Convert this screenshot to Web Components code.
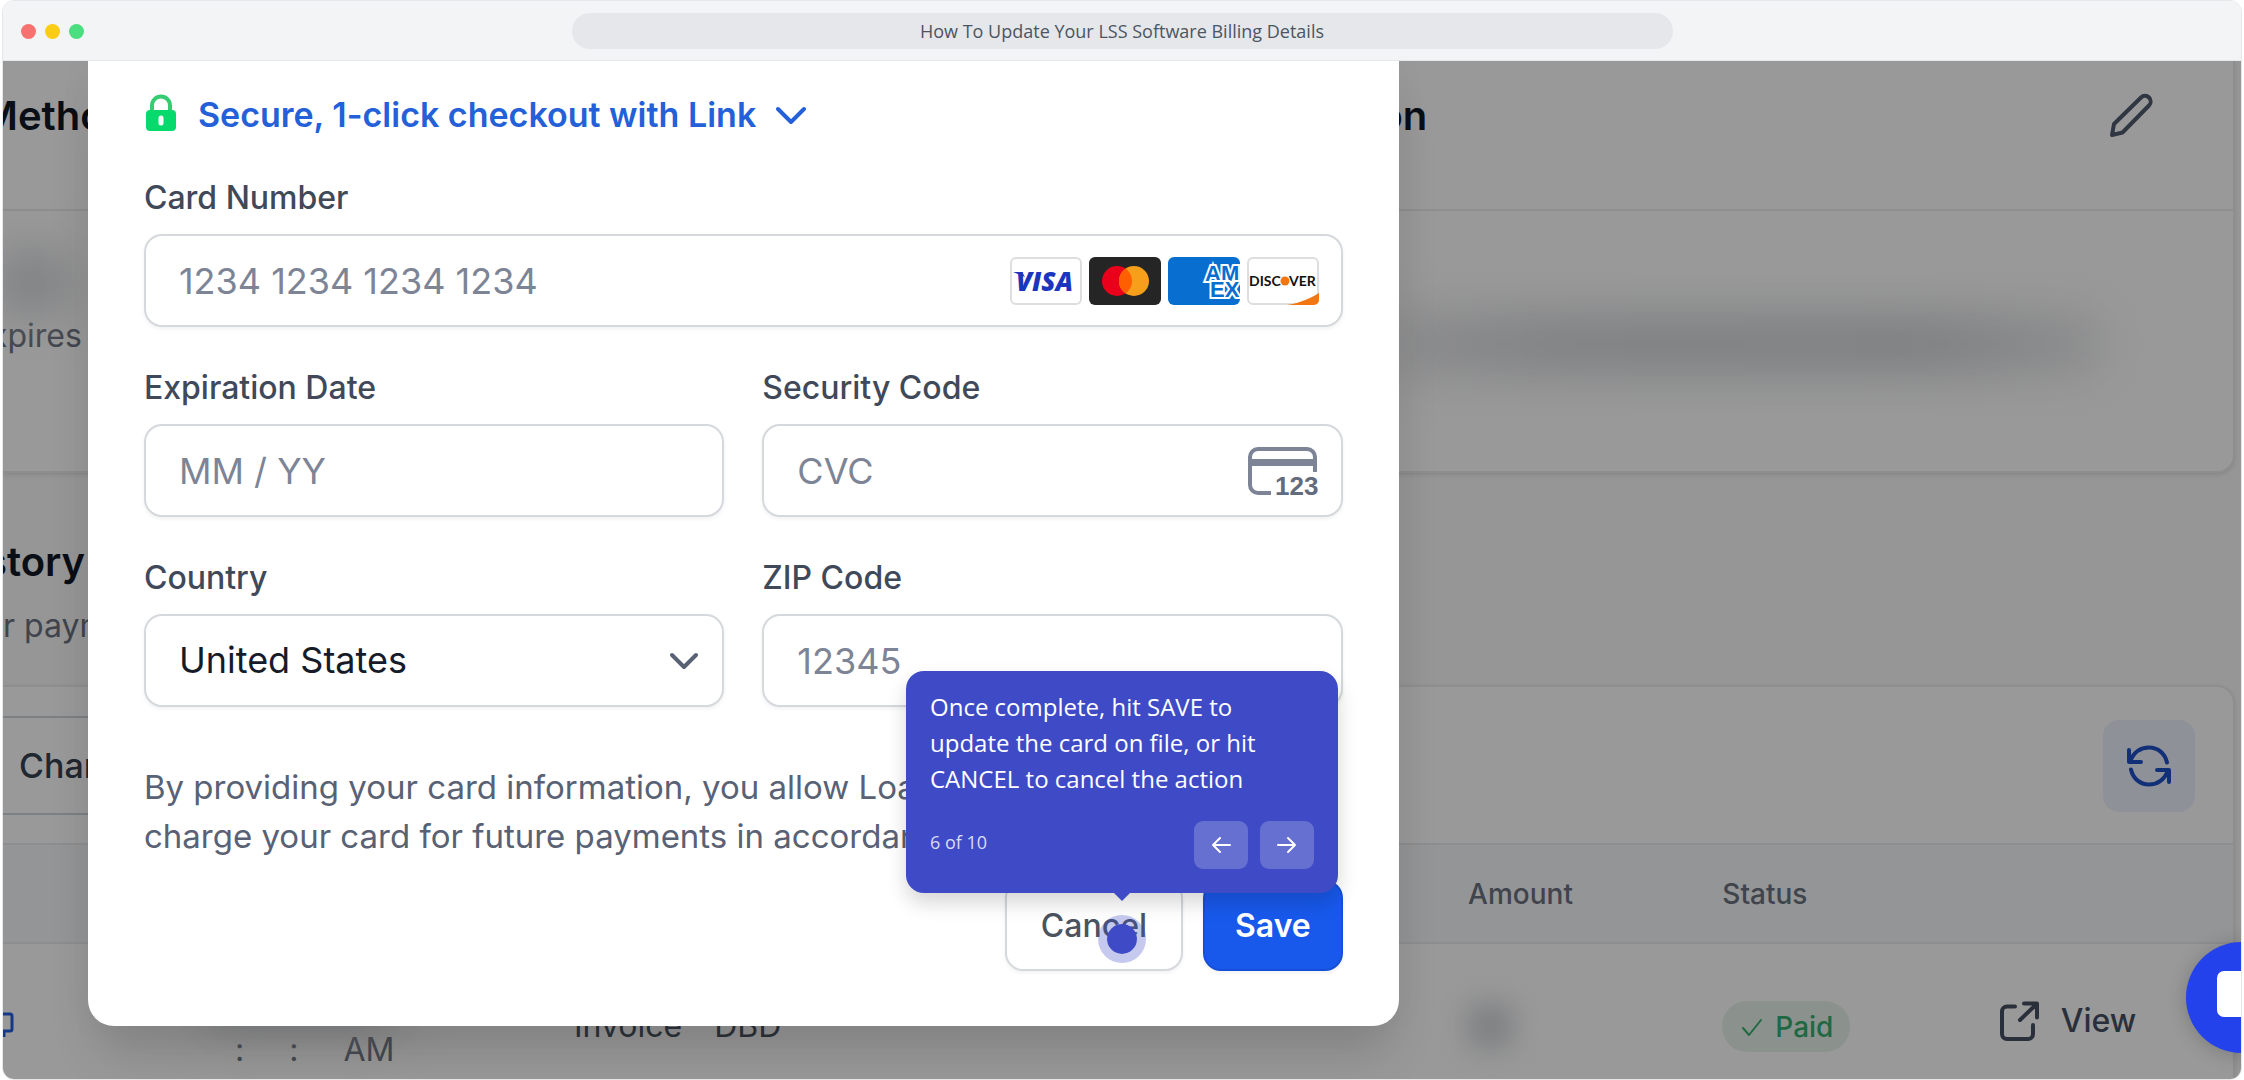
<!DOCTYPE html>
<html lang="en">
<head>
<meta charset="utf-8">
<title>How To Update Your LSS Software Billing Details</title>
<style>
  html,body{height:100%;margin:0}
  body{background:#fff;overflow:hidden;font-family:Inter,"Liberation Sans",sans-serif}
</style>
</head>
<body>
<browser-frame heading="How To Update Your LSS Software Billing Details">
  <billing-page></billing-page>
  <card-dialog slot="over"></card-dialog>
  <chat-bubble slot="over"></chat-bubble>
  <tour-step slot="over" step="6" total="10">Once complete, hit SAVE to update the card on file, or hit CANCEL to cancel the action</tour-step>
</browser-frame>

<script>
(()=>{
  const define=(name,render)=>customElements.define(name,class extends HTMLElement{
    connectedCallback(){
      if(this.shadowRoot)return;
      this.attachShadow({mode:'open'}).innerHTML=render(this);
    }
  });

  const reset=`*{box-sizing:border-box}
svg{display:block;flex-shrink:0}
button{font:inherit;color:inherit;cursor:pointer}
h2,p{margin:0}`;

  define('browser-frame',el=>`<style>${reset}
:host{display:flex;flex-direction:column;height:100vh;margin:0 2px;box-sizing:border-box;
  border:1px solid #e5e7eb;border-radius:12px;overflow:hidden}
header{display:grid;grid-template-columns:1fr 2fr 1fr;align-items:center;flex-shrink:0;
  padding:12px 18px 11px;background:#f3f4f6;border-bottom:1px solid #e5e7eb}
.dots{display:flex;gap:9px}
.dots i{width:15px;height:15px;border-radius:50%}
.bar{border-radius:18px;background:#e5e7eb;color:#4b5563;text-align:center;
  font:18px/36px "Open Sans",sans-serif}
main{position:relative;flex:1;min-height:0;overflow:hidden}
.dim{position:absolute;inset:0;background:rgba(0,0,0,.4)}
</style>
<header>
  <span class="dots"><i style="background:#f87171"></i><i style="background:#facc15"></i><i style="background:#4ade80"></i></span>
  <div class="bar">${el.getAttribute('heading')}</div>
</header>
<main><slot></slot><div class="dim"></div><slot name="over"></slot></main>`);

  define('billing-page',()=>`<style>${reset}
:host{display:block;background:#fafafa;color:#111827;padding-right:6px;white-space:nowrap}
.card{background:#fff;border:solid #ededee;border-width:0 2px 2px 0;box-shadow:0 2px 4px rgba(0,0,0,.1)}
.method{border-radius:0 0 18px 0}
.title{display:grid;grid-template-columns:85fr 1312fr 843fr;align-items:center;
  padding:27px 0 65px;border-bottom:2px solid #ededee}
h2{font-size:40px;line-height:56px;font-weight:600}
.title h2:first-child{margin-left:-22px}
.title .end{grid-column:3;display:flex;justify-content:space-between;align-items:center;padding-right:79px}
.title .end h2{margin-left:-22px}
.title button{border:0;background:none;padding:0;color:#505a6e}
.info{display:grid;grid-template-columns:1397fr 843fr;align-items:end;padding:41px 0 111px;
  font-size:32px;line-height:48px;color:#6b7280}
.info div{margin-left:-13px}
.smudge{display:block;filter:blur(24px);background:#d2d4d8}
.history{padding:61px 0 35px;color:#6b7280;font-size:32px;line-height:48px}
.history h2{margin:0 0 12px -18px;color:#111827}
.list{border-width:2px 2px 0 0;border-radius:0 18px 0 0}
.tools{display:flex;justify-content:space-between;align-items:center;padding:29px 38px 28px 0}
.pick{padding:24px 60px 24px 16px;border:solid #d1d5db;border-width:2px 0;background:#fff;
  color:#374151;font-size:34px;line-height:47px;font-weight:500}
.refresh{display:grid;place-items:center;width:92px;height:92px;border:0;border-radius:16px;background:#eff2ff;color:#1d50c8}
table{width:100%;table-layout:fixed;border-collapse:collapse;text-align:left;font-size:32px;line-height:48px;color:#4b5563}
th,td{padding:0}
th{height:99px;background:#f7f8fa;border:solid #ededee;border-width:2px 0;font-size:28px;font-weight:500;color:#6b7280}
td{padding:34px 0}
.date{color:#6b7280;white-space:pre}
.item span{margin-left:32px}
.paid{display:inline-flex;align-items:center;gap:12px;padding:2px 17px 1px 19px;border-radius:25px;
  background:#e8f4ed;color:#36ad6f;font-size:28px;font-weight:500;vertical-align:middle}
.view{display:flex;align-items:center;gap:22px;padding-bottom:10px;color:#465063;font-weight:500;text-decoration:none}
</style>
<section class="card method">
  <div class="title">
    <h2>Metho</h2>
    <div class="end">
      <h2>on</h2>
      <button aria-label="Edit billing information"><svg width="46" height="46" viewBox="0 0 46 46" fill="none" stroke="currentColor" stroke-width="4" stroke-linejoin="round"><path d="M4 42l2-11L33 4.500a5.500 5.500 0 0 1 8 8L14.500 39.500z"/></svg></button>
    </div>
  </div>
  <div class="info">
    <div><span class="smudge" style="width:70px;height:60px;margin-left:8px"></span>xpires</div>
    <span class="smudge" style="width:84%;height:56px;margin-bottom:-12px;background:linear-gradient(90deg,#e4e5e8,#d2d4d8 25%,#cfd1d5 75%,#e8e9eb)"></span>
  </div>
</section>
<section class="history"><h2>story</h2>r paym</section>
<section class="card list">
  <div class="tools">
    <button class="pick">Char</button>
    <button class="refresh" aria-label="Refresh"><svg width="46" height="42" viewBox="0 0 46 42" fill="none" stroke="currentColor" stroke-width="4" stroke-linecap="round" stroke-linejoin="round"><path d="M3 5v12h12M4 16C8 7 15 2.500 23 2.500c9 0 16 6 18 15M43 37V25H31M42 26c-4 9-11 13.500-19 13.500-9 0-16-6-18-15"/></svg></button>
  </div>
  <table>
    <colgroup><col style="width:10%"><col style="width:15.600%"><col style="width:40.100%"><col style="width:11.400%"><col style="width:12.400%"><col></colgroup>
    <thead><tr><th></th><th></th><th></th><th>Amount</th><th>Status</th><th></th></tr></thead>
    <tbody><tr>
      <td><svg width="12" height="32" viewBox="0 0 12 32" fill="none" stroke="#2460e0" stroke-width="3"><path d="M-2 4h9a2 2 0 0 1 2 2v13a2 2 0 0 1-2 2H1v6"/></svg></td>
      <td class="date"><span class="smudge" style="width:190px;height:48px;margin-left:-20px"></span> :     :     AM</td>
      <td class="item">Invoice<span>DBD</span></td>
      <td><span class="smudge" style="width:44px;height:44px;filter:blur(14px)"></span></td>
      <td><span class="paid"><svg width="22" height="22" viewBox="0 0 22 22" fill="none" stroke="currentColor" stroke-width="2" stroke-linecap="round" stroke-linejoin="round"><path d="M2 12l6 7L20 4"/></svg>Paid</span></td>
      <td><a class="view" href="#"><svg width="40" height="40" viewBox="0 0 40 40" fill="none" stroke="currentColor" stroke-width="4" stroke-linecap="round" stroke-linejoin="round"><path d="M16 5.500H8a5 5 0 0 0-5 5V33a5 5 0 0 0 5 5h21a5 5 0 0 0 5-5V24M25 2.500h13v14M37 3.500L21 19"/></svg>View</a></td>
    </tr></tbody>
  </table>
</section>`);

  define('form-field',el=>`<style>${reset}
:host{display:block;min-width:0}
label{display:block;margin-bottom:16px;font-size:32px;line-height:40px;font-weight:500;color:#3f4959}
.box{display:flex;align-items:center;border:2px solid #d5d8dd;border-radius:18px;background:#fff;
  box-shadow:0 2px 4px rgba(0,0,0,.06);padding-right:22px}
input,select{flex:1;min-width:0;border:0;outline:0;background:none;appearance:none;
  padding:20px 0 20px 33px;font:36px/49px Inter,sans-serif;height:89px;color:#161b2a}
input::placeholder{color:#7d8496;opacity:1}
</style>
<label for="f">${el.getAttribute('label')}</label>
<div class="box">${el.hasAttribute('value')
    ?`<select id="f"><option>${el.getAttribute('value')}</option></select>`
    :`<input id="f" placeholder="${el.getAttribute('hint')}">`}<slot></slot></div>`);

  define('card-brands',()=>`<style>${reset}
:host{display:flex;gap:7px}
svg{font-family:"Open Sans",sans-serif;font-weight:700}
</style>
<svg width="72" height="48" viewBox="0 0 72 48"><rect x="1" y="1" width="70" height="46" rx="5" fill="#fff" stroke="#dedede" stroke-width="2"/><path d="M3 15h9l3 5z" fill="#1a35be"/><text x="6" y="34" font-size="26" font-style="italic" font-weight="800" fill="#1a35be">VISA</text></svg>
<svg width="72" height="48" viewBox="0 0 72 48"><rect width="72" height="48" rx="6" fill="#252525"/><circle cx="28" cy="24" r="15" fill="#eb001b"/><circle cx="45" cy="24" r="15" fill="#f79e1b"/><path d="M36.500 11.600a15 15 0 0 1 0 24.800a15 15 0 0 1 0-24.800z" fill="#ff5f00"/></svg>
<svg width="72" height="48" viewBox="0 0 72 48"><rect width="72" height="48" rx="6" fill="#086fd1"/><g fill="#086fd1" stroke="#fff" stroke-width="4" paint-order="stroke" font-size="22" font-family="Liberation Sans"><text x="37" y="24">AM</text><text x="42" y="40">EX</text></g></svg>
<svg width="72" height="48" viewBox="0 0 72 48"><rect x="1" y="1" width="70" height="46" rx="5" fill="#fff" stroke="#dedede" stroke-width="2"/><path d="M40 48C52 46 62 42 72 36v7a5 5 0 0 1-5 5z" fill="#f27712"/><g font-size="14" font-family="Lato" fill="#111"><text x="2" y="29">DISC</text><text x="42" y="29">VER</text></g><circle cx="38" cy="24" r="4.500" fill="#f27712"/></svg>`);

  define('card-dialog',()=>`<style>${reset}
:host{position:absolute;inset:0;display:grid;grid-template-columns:85fr 1312fr 843fr;align-items:start}
form{grid-column:2;display:flex;flex-direction:column;padding:29px 56px 55px;background:#fff;
  border-radius:0 0 26px 26px;box-shadow:0 36px 50px -10px rgba(0,0,0,.14),0 0 40px rgba(0,0,0,.03)}
.link{display:flex;align-items:center;align-self:flex-start;gap:20px;padding:0;border:0;background:none;
  margin-bottom:38px;font-size:34px;line-height:50px;font-weight:600;color:#2460d8}
.fields{display:grid;grid-template-columns:1fr 1fr;gap:41px 38px}
.wide{grid-column:1/-1}
p{margin:56px 0 19px;font-size:33px;line-height:49px;color:#596174;white-space:nowrap}
.actions{display:flex;justify-content:flex-end;gap:20px}
.actions button{padding:20px 34px;border:2px solid #d5d8dd;border-radius:18px;background:#fff;
  box-shadow:0 2px 4px rgba(0,0,0,.06);font-size:32px;line-height:47px;font-weight:500;color:#4b5361}
.actions .save{padding:20px 30px;border-color:#1650d8;background:#1859ec;color:#fff;font-weight:600}
</style>
<form>
  <button class="link" type="button">
    <svg width="34" height="44" viewBox="0 0 34 44"><path d="M8 20v-7.500a9 9 0 0 1 18 0V20" fill="none" stroke="#35cc72" stroke-width="4"/><path fill="#06da6c" fill-rule="evenodd" d="M6 17h22a4 4 0 0 1 4 4v13a4 4 0 0 1-4 4H6a4 4 0 0 1-4-4V21a4 4 0 0 1 4-4zM17 22.500a2.500 2.500 0 0 0-2.500 2.500v5a2.500 2.500 0 0 0 5 0v-5a2.500 2.500 0 0 0-2.500-2.500z"/></svg>
    Secure, 1-click checkout with Link
    <svg width="30" height="20" viewBox="0 0 30 20" fill="none" stroke="currentColor" stroke-width="4" stroke-linecap="round" stroke-linejoin="round"><path d="M2 4l13 13L28 4"/></svg>
  </button>
  <div class="fields">
    <form-field class="wide" label="Card Number" hint="1234 1234 1234 1234"><card-brands></card-brands></form-field>
    <form-field label="Expiration Date" hint="MM / YY"></form-field>
    <form-field label="Security Code" hint="CVC">
      <svg width="72" height="50" viewBox="0 0 72 50"><path d="M24 47H11a8 8 0 0 1-8-8V11a8 8 0 0 1 8-8h49a8 8 0 0 1 8 8v15" fill="none" stroke="#7d8496" stroke-width="4"/><path d="M3 13h65v7H3z" fill="#7d8496"/><text x="28" y="49" font-family="Liberation Sans" font-weight="700" font-size="26" fill="#646b7c">123</text></svg>
    </form-field>
    <form-field label="Country" value="United States">
      <svg width="30" height="20" viewBox="0 0 30 20" fill="none" stroke="#596174" stroke-width="4" stroke-linecap="round" stroke-linejoin="round"><path d="M2 4l12 12L26 4"/></svg>
    </form-field>
    <form-field label="ZIP Code" hint="12345"></form-field>
  </div>
  <p>By providing your card information, you allow Loa<br>charge your card for future payments in accordan</p>
  <div class="actions"><button type="button">Cancel</button><button type="button" class="save">Save</button></div>
</form>`);

  define('chat-bubble',()=>`<style>${reset}
:host{position:absolute;right:-56px;bottom:26px}
button{display:block;width:111px;height:111px;padding:0;border:0;border-radius:50%;background:#2342eb;
  box-shadow:0 2px 20px rgba(0,0,0,.2)}
</style>
<button aria-label="Open chat"><svg width="111" height="111" viewBox="0 0 111 111" fill="#fff"><path d="M38 29h36a7 7 0 0 1 7 7v48a26 26 0 0 1-26-9H38a7 7 0 0 1-7-7V36a7 7 0 0 1 7-7z"/></svg></button>`);

  define('tour-step',el=>`<style>${reset}
:host{position:absolute;left:50%;top:610px;width:432px;transform:translateX(-50%);
  font-family:"Open Sans",sans-serif;color:#fff}
.tip{position:relative;padding:18px 24px 24px;border-radius:18px;background:#3f4bc6;
  box-shadow:0 10px 20px rgba(0,0,0,.16)}
.tip::after{content:"";position:absolute;left:50%;top:100%;margin-left:-8px;
  border:8px solid transparent;border-top-color:#3f4bc6;border-bottom:0}
p{font-size:24px;line-height:36px}
.nav{display:flex;align-items:center;gap:12px;margin-top:24px;font-size:18px;line-height:42px}
.nav span{flex:1;align-self:flex-start;color:#d9dbf4}
.nav button{display:grid;place-items:center;width:54px;height:48px;border:0;border-radius:9px;background:#6570d0}
.spot{position:absolute;left:50%;top:calc(100% + 22px);margin-left:-24px;width:48px;height:48px;
  border:9px solid rgba(63,75,198,.3);border-radius:50%;background:#3f4bc6;background-clip:padding-box}
</style>
<div class="tip">
  <p><slot></slot></p>
  <div class="nav"><span>${el.getAttribute('step')} of ${el.getAttribute('total')}</span>
    <button aria-label="Previous"><svg width="20" height="18" viewBox="0 0 20 18" fill="none" stroke="#fff" stroke-width="2" stroke-linecap="round" stroke-linejoin="round"><path d="M19 9H2M9 2L2 9l7 7"/></svg></button>
    <button aria-label="Next"><svg width="20" height="18" viewBox="0 0 20 18" fill="none" stroke="#fff" stroke-width="2" stroke-linecap="round" stroke-linejoin="round"><path d="M1 9h17M11 2l7 7-7 7"/></svg></button>
  </div>
</div>
<i class="spot"></i>`);
})();
</script>
</body>
</html>
